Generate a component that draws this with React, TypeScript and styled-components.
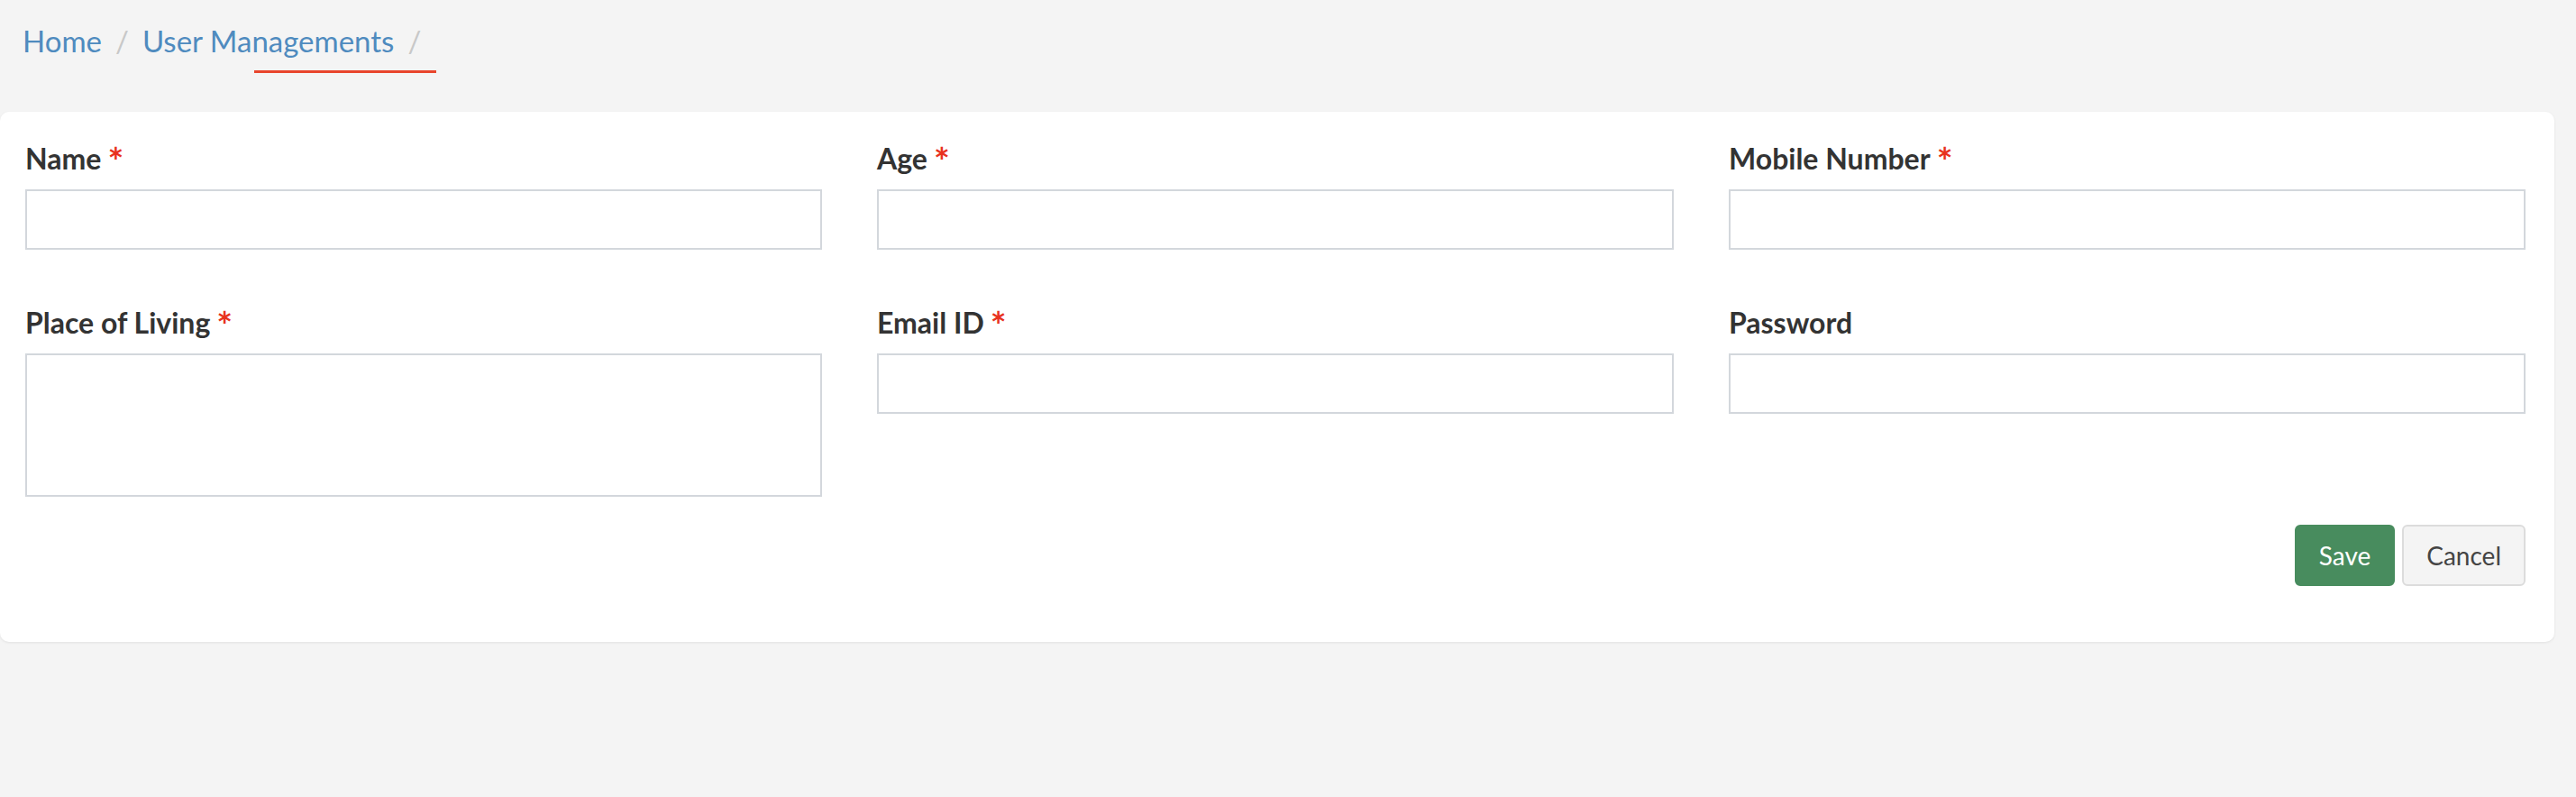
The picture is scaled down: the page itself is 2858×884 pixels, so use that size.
import styled, { createGlobalStyle } from "styled-components"

const GlobalStyle = createGlobalStyle`
  html, body {
    margin: 0;
    padding: 0;
    background-color: #f4f4f4;
    font-family: Lato, "Noto Sans", "Liberation Sans", sans-serif;
  }
  * {
    box-sizing: border-box;
  }
`

type Field = {
  label: string
  required?: boolean
  multiline?: boolean
  type?: string
}

const fields: Field[] = [
  { label: "Name", required: true },
  { label: "Age", required: true },
  { label: "Mobile Number", required: true },
  { label: "Place of Living", required: true, multiline: true },
  { label: "Email ID", required: true, type: "email" },
  { label: "Password", type: "password" },
]

const App = () => {
  return (
    <>
      <GlobalStyle />
      <Page>
        <Breadcrumb>
          <Crumb href="#">Home</Crumb>
          <Separator>/</Separator>
          <Crumb href="#">User Managements</Crumb>
          <Separator>/</Separator>
        </Breadcrumb>
        <ActiveLine />

        <Card>
          <FormGrid>
            {fields.map((f) => (
              <FieldBox key={f.label}>
                <Label>
                  {f.label}
                  {f.required && <Star>*</Star>}
                </Label>
                {f.multiline ? <TextArea /> : <Input type={f.type || "text"} />}
              </FieldBox>
            ))}
          </FormGrid>

          <Actions>
            <Button $primary>Save</Button>
            <Button>Cancel</Button>
          </Actions>
        </Card>
      </Page>
    </>
  )
}

export default App

const Page = styled.div`
  width: 100%;
  min-height: 884px;
  padding-top: 25px;
`

const Breadcrumb = styled.nav`
  display: flex;
  align-items: center;
  padding-left: 25px;
  font-size: 33px;
  line-height: 40px;
`

const Crumb = styled.a`
  color: #4f8bbf;
  text-decoration: none;
`

const Separator = styled.span`
  color: #c8c8c8;
  padding: 0 15px;
`

const ActiveLine = styled.div`
  width: 202px;
  height: 3px;
  margin: 13px 0 0 282px;
  background-color: #e8452c;
`

const Card = styled.div`
  margin: 43px 24px 0 0;
  padding: 32px 32px 62px 28px;
  background-color: #ffffff;
  border-radius: 10px;
  box-shadow: 0 1px 3px rgba(0, 0, 0, 0.08);
`

const FormGrid = styled.div`
  display: grid;
  grid-template-columns: repeat(3, 1fr);
  gap: 61px;
  align-items: start;
`

const FieldBox = styled.div`
  display: flex;
  flex-direction: column;
`

const Label = styled.label`
  font-size: 32px;
  line-height: 40px;
  font-weight: 700;
  color: #333333;
  margin-bottom: 14px;
`

const Star = styled.span`
  color: #e8321e;
  margin-left: 7px;
  font-size: 42px;
  line-height: 0;
  position: relative;
  top: 7px;
`

const Input = styled.input`
  width: 100%;
  height: 67px;
  border: 2px solid #d3d7dc;
  border-radius: 0;
  outline: none;
  padding: 0 14px;
  font-size: 28px;
  font-family: inherit;
`

const TextArea = styled.textarea`
  width: 100%;
  height: 159px;
  border: 2px solid #d3d7dc;
  border-radius: 0;
  outline: none;
  padding: 12px 14px;
  font-size: 28px;
  font-family: inherit;
  resize: none;
  display: block;
`

const Actions = styled.div`
  display: flex;
  justify-content: flex-end;
  gap: 8px;
  margin-top: 31px;
`

const Button = styled.button<{ $primary?: boolean }>`
  height: 68px;
  padding: 0 25px;
  font-family: inherit;
  font-size: 28px;
  border-radius: 6px;
  cursor: pointer;
  background-color: ${(p) => (p.$primary ? "#488c5e" : "#f4f4f4")};
  color: ${(p) => (p.$primary ? "#ffffff" : "#444444")};
  border: 2px solid ${(p) => (p.$primary ? "#488c5e" : "#dcdcdc")};
`
